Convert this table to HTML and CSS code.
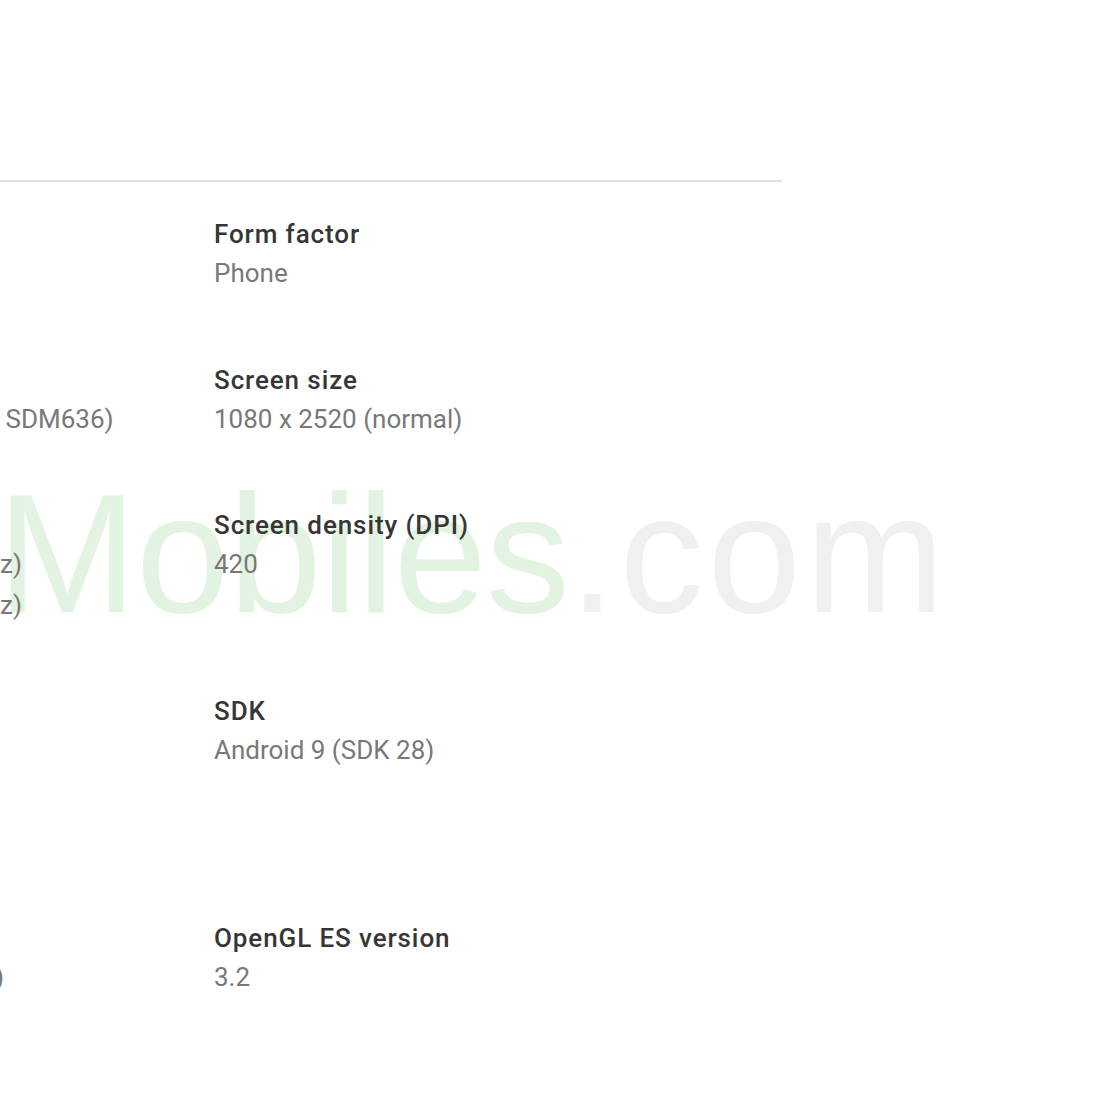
FILE: index.html
```html
<!DOCTYPE html>
<html lang="en">
<head>
  <meta charset="UTF-8" />
  <meta name="viewport" content="width=device-width, initial-scale=1.0" />
  <title>Device details</title>
  <link rel="stylesheet" href="styles.css">
</head>
<body>
  <div class="page">
    <div class="watermark"><span class="wm-name">Mobiles</span><span class="wm-tld">.com</span></div>

    <!-- Device specs -->
    <section class="specs">
      <div class="spec-row">
        <div class="spec">
          <div class="spec-label">Model name</div>
          <div class="spec-value">Xiaomi</div>
        </div>
        <div class="spec">
          <div class="spec-label">Form factor</div>
          <div class="spec-value">Phone</div>
        </div>
      </div>

      <div class="spec-row">
        <div class="spec">
          <div class="spec-label">System on Chip</div>
          <div class="spec-value">(Qualcomm Technologies SDM636)</div>
        </div>
        <div class="spec">
          <div class="spec-label">Screen size</div>
          <div class="spec-value">1080 x 2520 (normal)</div>
        </div>
      </div>

      <div class="spec-row">
        <div class="spec">
          <div class="spec-label">CPU</div>
          <div class="spec-value">4 x Kryo 260 Gold (1.8 GHz)</div>
          <div class="spec-value">4 x Kryo 260 Gold (1.6 GHz)</div>
        </div>
        <div class="spec">
          <div class="spec-label">Screen density (DPI)</div>
          <div class="spec-value">420</div>
        </div>
      </div>

      <div class="spec-row">
        <div class="spec">
          <div class="spec-label">GPU</div>
          <div class="spec-value">Qualcomm</div>
          <div class="spec-value">Adreno 509</div>
          <div class="spec-value">(850 MHz)</div>
        </div>
        <div class="spec">
          <div class="spec-label">SDK</div>
          <div class="spec-value">Android 9 (SDK 28)</div>
        </div>
      </div>

      <div class="spec-row">
        <div class="spec">
          <div class="spec-label">RAM</div>
          <div class="spec-value">4 GB LPDDR4X (3712 MB)</div>
        </div>
        <div class="spec">
          <div class="spec-label">OpenGL ES version</div>
          <div class="spec-value">3.2</div>
        </div>
      </div>
    </section>
  </div>
</body>
</html>
```

FILE: styles.css
```css
:root {
  --label: #363636;
  --value: #787878;
  --divider: #e3e3e3;
}
* { box-sizing: border-box; }
html, body {
  margin: 0; padding: 0; height: 100%;
  background: #fff; overflow: hidden;
  font-family: Roboto, 'Noto Sans', sans-serif;
}
.page { position: relative; height: 100%; padding-top: 180px; }

/* watermark sits behind the text */
.watermark {
  position: absolute; left: -3px; top: 470px; z-index: 0;
  font-family: 'Liberation Sans', Arial, sans-serif;
  font-size: 168px; line-height: 1; white-space: nowrap;
  pointer-events: none;
}
.wm-name { color: #e3f3e1; letter-spacing: -1px; }
.wm-tld { color: #f0f0f0; letter-spacing: 4px; }

.specs {
  position: relative; z-index: 1;
  width: 782px;
  border-top: 2px solid var(--divider);
}
.spec-row {
  display: grid;
  grid-template-columns: 511px 1fr;
  margin-left: -297px;
  padding: 33px 0 34px;
}
.spec-label {
  font-size: 26px; line-height: 38px; font-weight: 500;
  letter-spacing: 0.9px; color: var(--label);
}
.spec-value { font-size: 26px; line-height: 40.5px; color: var(--value); white-space: nowrap; }
```
